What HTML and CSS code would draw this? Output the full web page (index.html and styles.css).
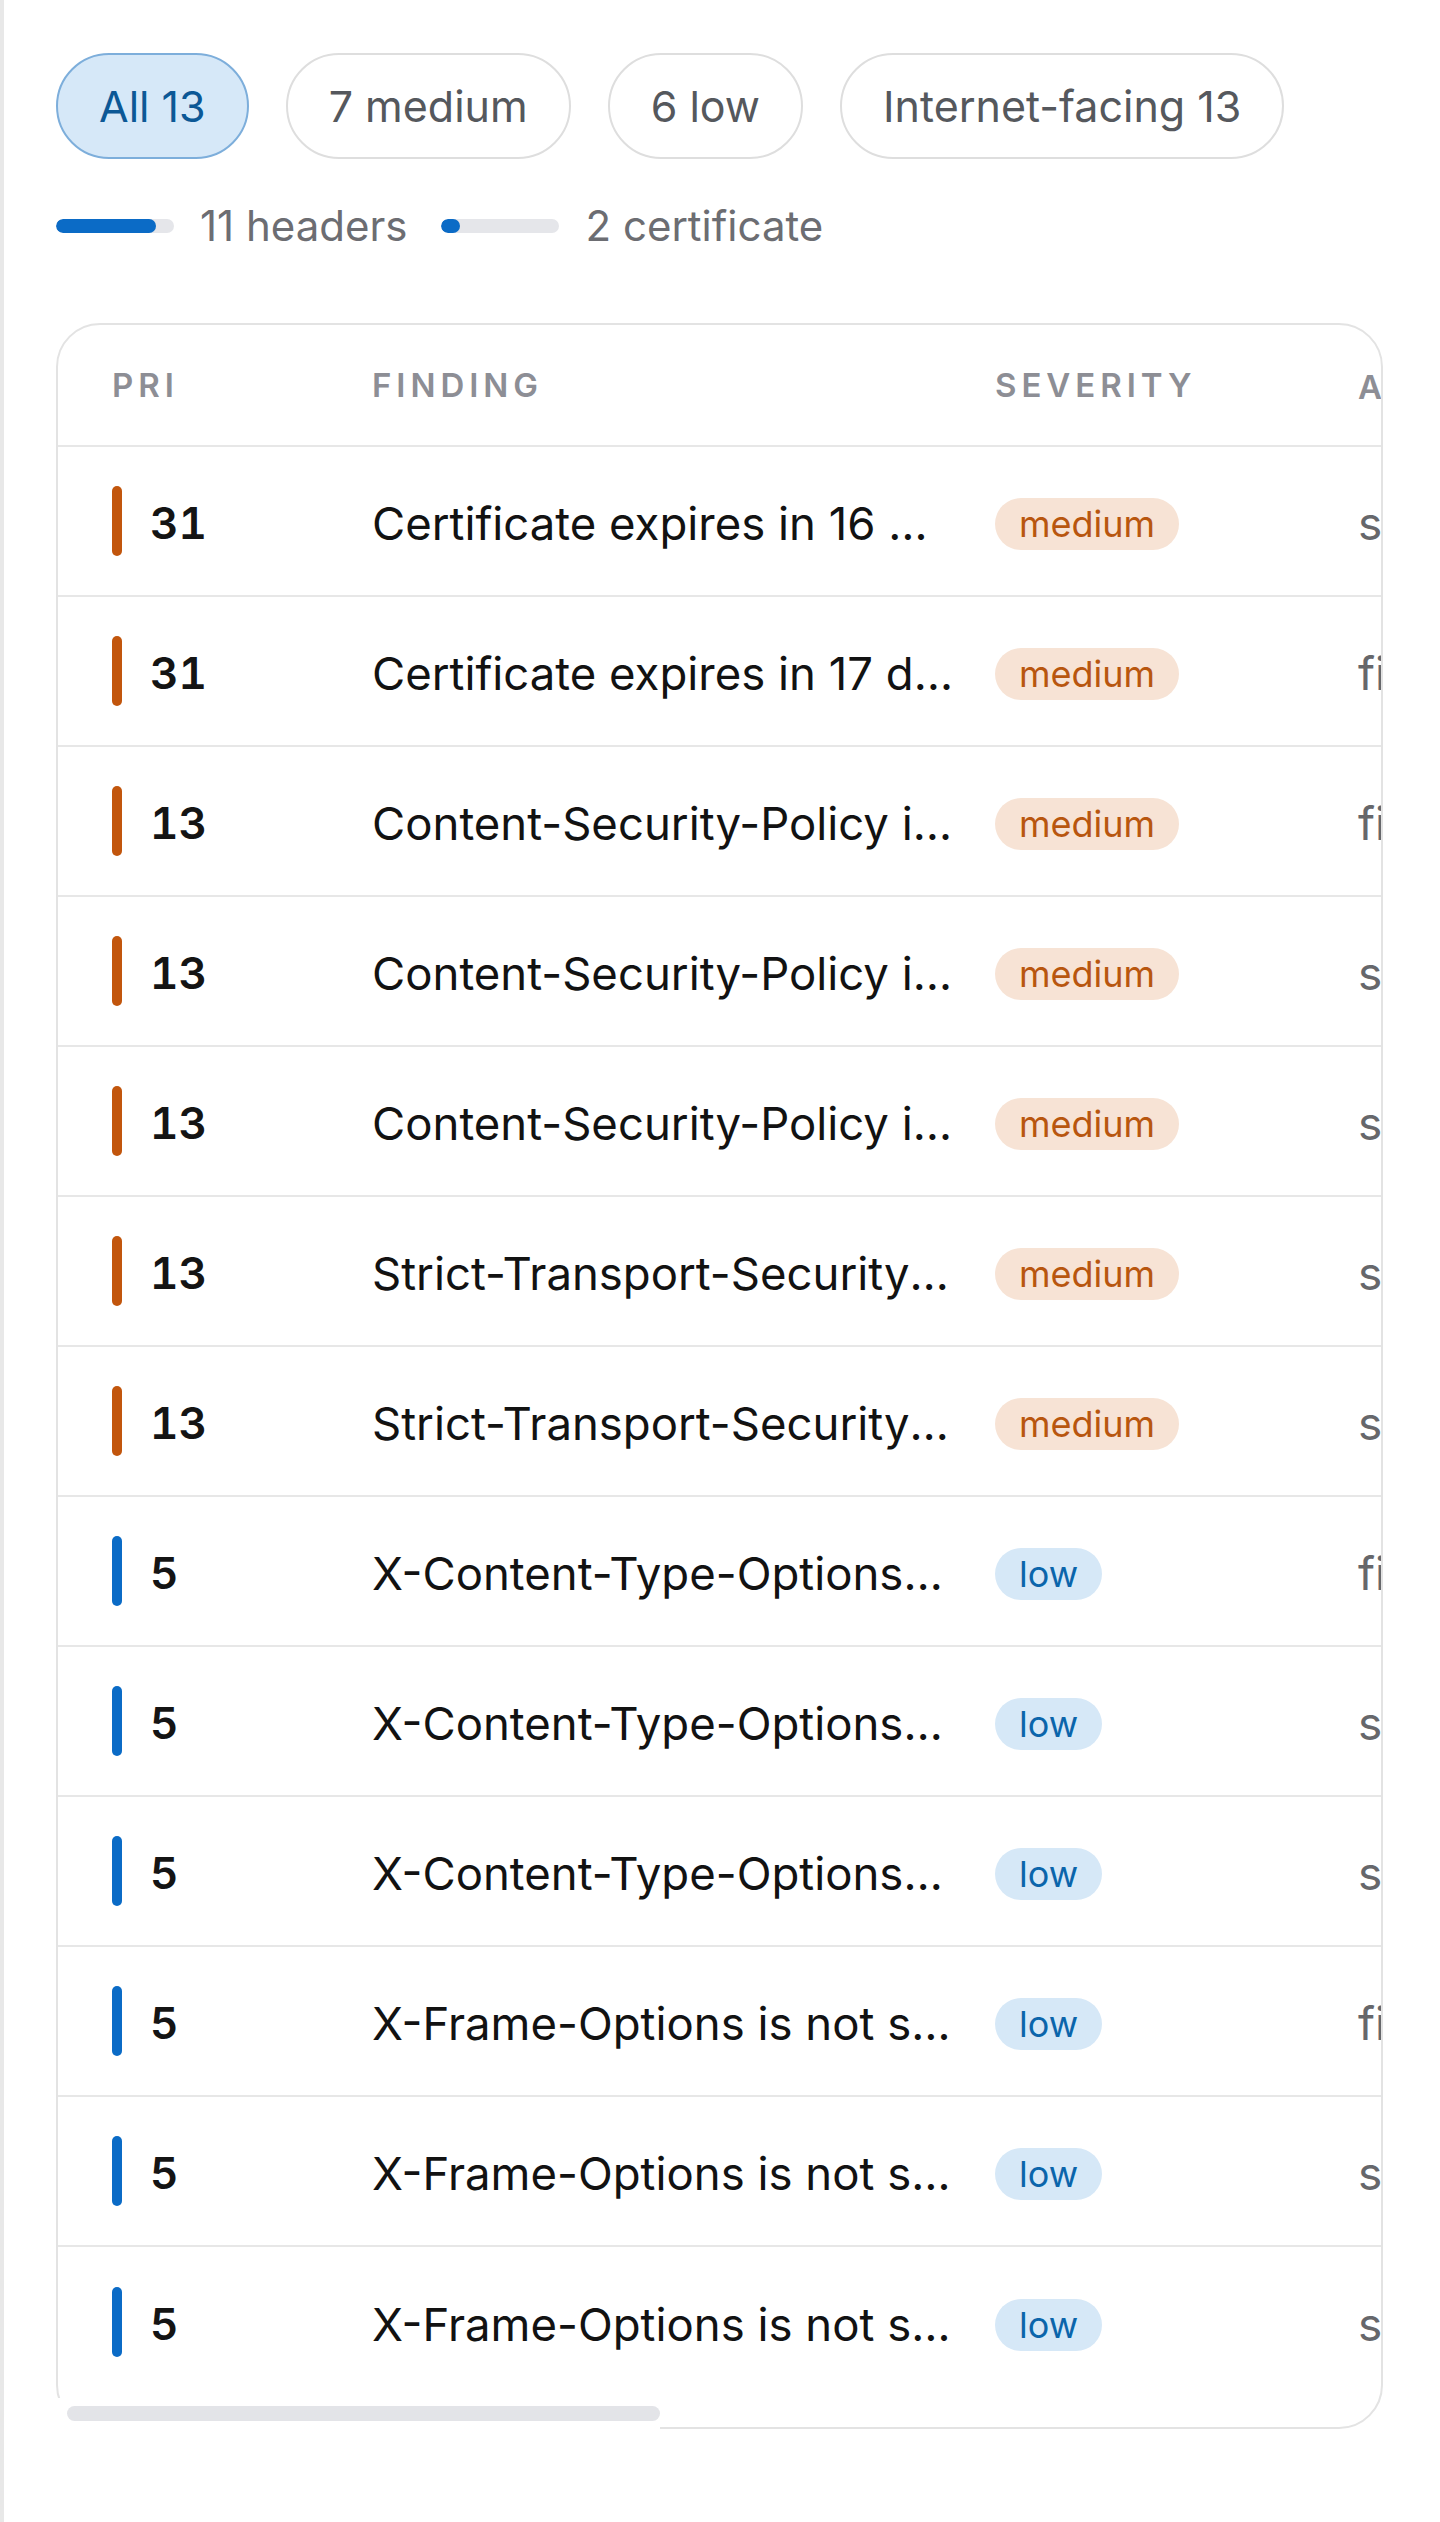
FILE: index.html
```html
<!DOCTYPE html>
<html lang="en">
<head>
<meta charset="utf-8">
<title>Findings</title>
<link rel="stylesheet" href="styles.css">
</head>
<body>
<main class="page">
  <div class="chips">
    <button class="chip chip-active">All 13</button>
    <button class="chip">7 medium</button>
    <button class="chip">6 low</button>
    <button class="chip">Internet-facing 13</button>
  </div>

  <div class="metrics">
    <div class="metric">
      <div class="track"><div class="fill" style="width: 84.6%"></div></div>
      <span class="metric-label">11 headers</span>
    </div>
    <div class="metric">
      <div class="track"><div class="fill" style="width: 15.4%"></div></div>
      <span class="metric-label">2 certificate</span>
    </div>
  </div>

  <div class="card-wrap">
    <div class="card">
      <div class="grid">
        <div class="row head">
          <div class="c c-pri">PRI</div>
          <div class="c c-find">FINDING</div>
          <div class="c c-sev">SEVERITY</div>
          <div class="c c-asset">ASSET</div>
        </div>

        <div class="row">
          <div class="c c-pri"><span class="pbar pbar-med"></span><span class="pnum">31</span></div>
          <div class="c c-find"><span class="ftext">Certificate expires in 16 days</span></div>
          <div class="c c-sev"><span class="badge badge-med">medium</span></div>
          <div class="c c-asset">shop.example.com</div>
        </div>
        <div class="row">
          <div class="c c-pri"><span class="pbar pbar-med"></span><span class="pnum">31</span></div>
          <div class="c c-find"><span class="ftext">Certificate expires in 17 days</span></div>
          <div class="c c-sev"><span class="badge badge-med">medium</span></div>
          <div class="c c-asset">files.example.com</div>
        </div>
        <div class="row">
          <div class="c c-pri"><span class="pbar pbar-med"></span><span class="pnum">13</span></div>
          <div class="c c-find"><span class="ftext">Content-Security-Policy is not set</span></div>
          <div class="c c-sev"><span class="badge badge-med">medium</span></div>
          <div class="c c-asset">files.example.com</div>
        </div>
        <div class="row">
          <div class="c c-pri"><span class="pbar pbar-med"></span><span class="pnum">13</span></div>
          <div class="c c-find"><span class="ftext">Content-Security-Policy is not set</span></div>
          <div class="c c-sev"><span class="badge badge-med">medium</span></div>
          <div class="c c-asset">shop.example.com</div>
        </div>
        <div class="row">
          <div class="c c-pri"><span class="pbar pbar-med"></span><span class="pnum">13</span></div>
          <div class="c c-find"><span class="ftext">Content-Security-Policy is not set</span></div>
          <div class="c c-sev"><span class="badge badge-med">medium</span></div>
          <div class="c c-asset">status.example.com</div>
        </div>
        <div class="row">
          <div class="c c-pri"><span class="pbar pbar-med"></span><span class="pnum">13</span></div>
          <div class="c c-find"><span class="ftext">Strict-Transport-Security is not set</span></div>
          <div class="c c-sev"><span class="badge badge-med">medium</span></div>
          <div class="c c-asset">shop.example.com</div>
        </div>
        <div class="row">
          <div class="c c-pri"><span class="pbar pbar-med"></span><span class="pnum">13</span></div>
          <div class="c c-find"><span class="ftext">Strict-Transport-Security is not set</span></div>
          <div class="c c-sev"><span class="badge badge-med">medium</span></div>
          <div class="c c-asset">status.example.com</div>
        </div>
        <div class="row">
          <div class="c c-pri"><span class="pbar pbar-low"></span><span class="pnum">5</span></div>
          <div class="c c-find"><span class="ftext">X-Content-Type-Options is not set</span></div>
          <div class="c c-sev"><span class="badge badge-low">low</span></div>
          <div class="c c-asset">files.example.com</div>
        </div>
        <div class="row">
          <div class="c c-pri"><span class="pbar pbar-low"></span><span class="pnum">5</span></div>
          <div class="c c-find"><span class="ftext">X-Content-Type-Options is not set</span></div>
          <div class="c c-sev"><span class="badge badge-low">low</span></div>
          <div class="c c-asset">shop.example.com</div>
        </div>
        <div class="row">
          <div class="c c-pri"><span class="pbar pbar-low"></span><span class="pnum">5</span></div>
          <div class="c c-find"><span class="ftext">X-Content-Type-Options is not set</span></div>
          <div class="c c-sev"><span class="badge badge-low">low</span></div>
          <div class="c c-asset">status.example.com</div>
        </div>
        <div class="row">
          <div class="c c-pri"><span class="pbar pbar-low"></span><span class="pnum">5</span></div>
          <div class="c c-find"><span class="ftext">X-Frame-Options is not set for this host</span></div>
          <div class="c c-sev"><span class="badge badge-low">low</span></div>
          <div class="c c-asset">files.example.com</div>
        </div>
        <div class="row">
          <div class="c c-pri"><span class="pbar pbar-low"></span><span class="pnum">5</span></div>
          <div class="c c-find"><span class="ftext">X-Frame-Options is not set for this host</span></div>
          <div class="c c-sev"><span class="badge badge-low">low</span></div>
          <div class="c c-asset">shop.example.com</div>
        </div>
        <div class="row row-last">
          <div class="c c-pri"><span class="pbar pbar-low"></span><span class="pnum">5</span></div>
          <div class="c c-find"><span class="ftext">X-Frame-Options is not set for this host</span></div>
          <div class="c c-sev"><span class="badge badge-low">low</span></div>
          <div class="c c-asset">status.example.com</div>
        </div>
      </div>
      <div class="scroll-space"></div>
    </div>
    <div class="scrollbar"><div class="thumb"></div></div>
  </div>
</main>
</body>
</html>
```

FILE: styles.css
```css
html {
  background: #ffffff;
}

body {
  margin: 0;
  min-height: 2522px;
  box-sizing: border-box;
  border-left: 4px solid #e8e8e8;
  font-family: "Inter", "Noto Sans", "Liberation Sans", sans-serif;
  color: #111111;
  background: #ffffff;
}

.page {
  padding: 53px 0 0 52px;
}

/* filter chips */
.chips {
  display: flex;
  gap: 37px;
}

.chip {
  box-sizing: border-box;
  height: 106px;
  padding: 0 41px;
  border: 2px solid #dedede;
  border-radius: 53px;
  background: #ffffff;
  color: #55585d;
  font-family: inherit;
  font-size: 43px;
  font-weight: 400;
  line-height: 1;
  display: inline-flex;
  align-items: center;
}

.chip-active {
  background: #d6e8f8;
  border-color: #7daedb;
  color: #0c5896;
}

/* category metrics */
.metrics {
  display: flex;
  align-items: center;
  gap: 34px;
  margin-top: 43px;
  height: 47px;
}

.metric {
  display: flex;
  align-items: center;
  gap: 26px;
}

.track {
  width: 118px;
  height: 14px;
  border-radius: 7px;
  background: #e5e6ea;
  overflow: hidden;
}

.fill {
  height: 100%;
  border-radius: 7px;
  background: #0b6bc6;
}

.metric-label {
  font-size: 42px;
  color: #6c6d72;
  line-height: 47px;
}

/* table card */
.card-wrap {
  position: relative;
  width: 1327px;
  margin-top: 74px;
}

.card {
  box-sizing: border-box;
  width: 1327px;
  border: 2px solid #e3e3e3;
  border-radius: 44px;
  overflow: hidden;
  background: #ffffff;
}

.grid {
  width: 2872px;
}

.row {
  display: grid;
  grid-template-columns: 286px 623px 363px 1600px;
  align-items: center;
  box-sizing: border-box;
  height: 150px;
  border-bottom: 2px solid #e7e7e7;
}

.row.head {
  height: 122px;
}

.row.row-last {
  border-bottom: none;
}

.c {
  box-sizing: border-box;
  padding-left: 28px;
  white-space: nowrap;
  overflow: hidden;
}

.c.c-pri {
  padding-left: 54px;
  display: flex;
  align-items: center;
  gap: 28px;
}

.head .c {
  font-size: 33px;
  font-weight: 600;
  letter-spacing: 0.15em;
  color: #8d8e95;
}

.pbar {
  display: block;
  width: 10px;
  height: 70px;
  border-radius: 5px;
}

.pbar-med {
  background: #c2560d;
}

.pbar-low {
  background: #0b6bc6;
}

.pnum {
  font-size: 44px;
  font-weight: 600;
  font-variant-numeric: tabular-nums;
  color: #141414;
  padding-top: 4px;
}

.ftext {
  display: block;
  max-width: 583px;
  overflow: hidden;
  text-overflow: ellipsis;
  white-space: nowrap;
  font-size: 45.5px;
  color: #121212;
  padding-top: 4px;
}

.badge {
  display: inline-block;
  height: 52px;
  line-height: 52px;
  padding: 0 24px;
  border-radius: 26px;
  font-size: 36px;
  margin-top: 6px;
}

.badge-med {
  background: #f7e3d5;
  color: #b8560f;
}

.badge-low {
  background: #d6e8f7;
  color: #0b65ab;
}

.c-asset {
  font-size: 46px;
  color: #66676b;
  padding-top: 4px;
}

.scroll-space {
  height: 30px;
}

/* horizontal scrollbar overlay at the card's bottom edge */
.scrollbar {
  position: absolute;
  left: 0;
  bottom: 0;
  width: 604px;
  height: 31px;
  background: #ffffff;
}

.thumb {
  margin: 8px 0 0 11px;
  width: 593px;
  height: 15px;
  border-radius: 8px;
  background: #e3e4e8;
}
```
